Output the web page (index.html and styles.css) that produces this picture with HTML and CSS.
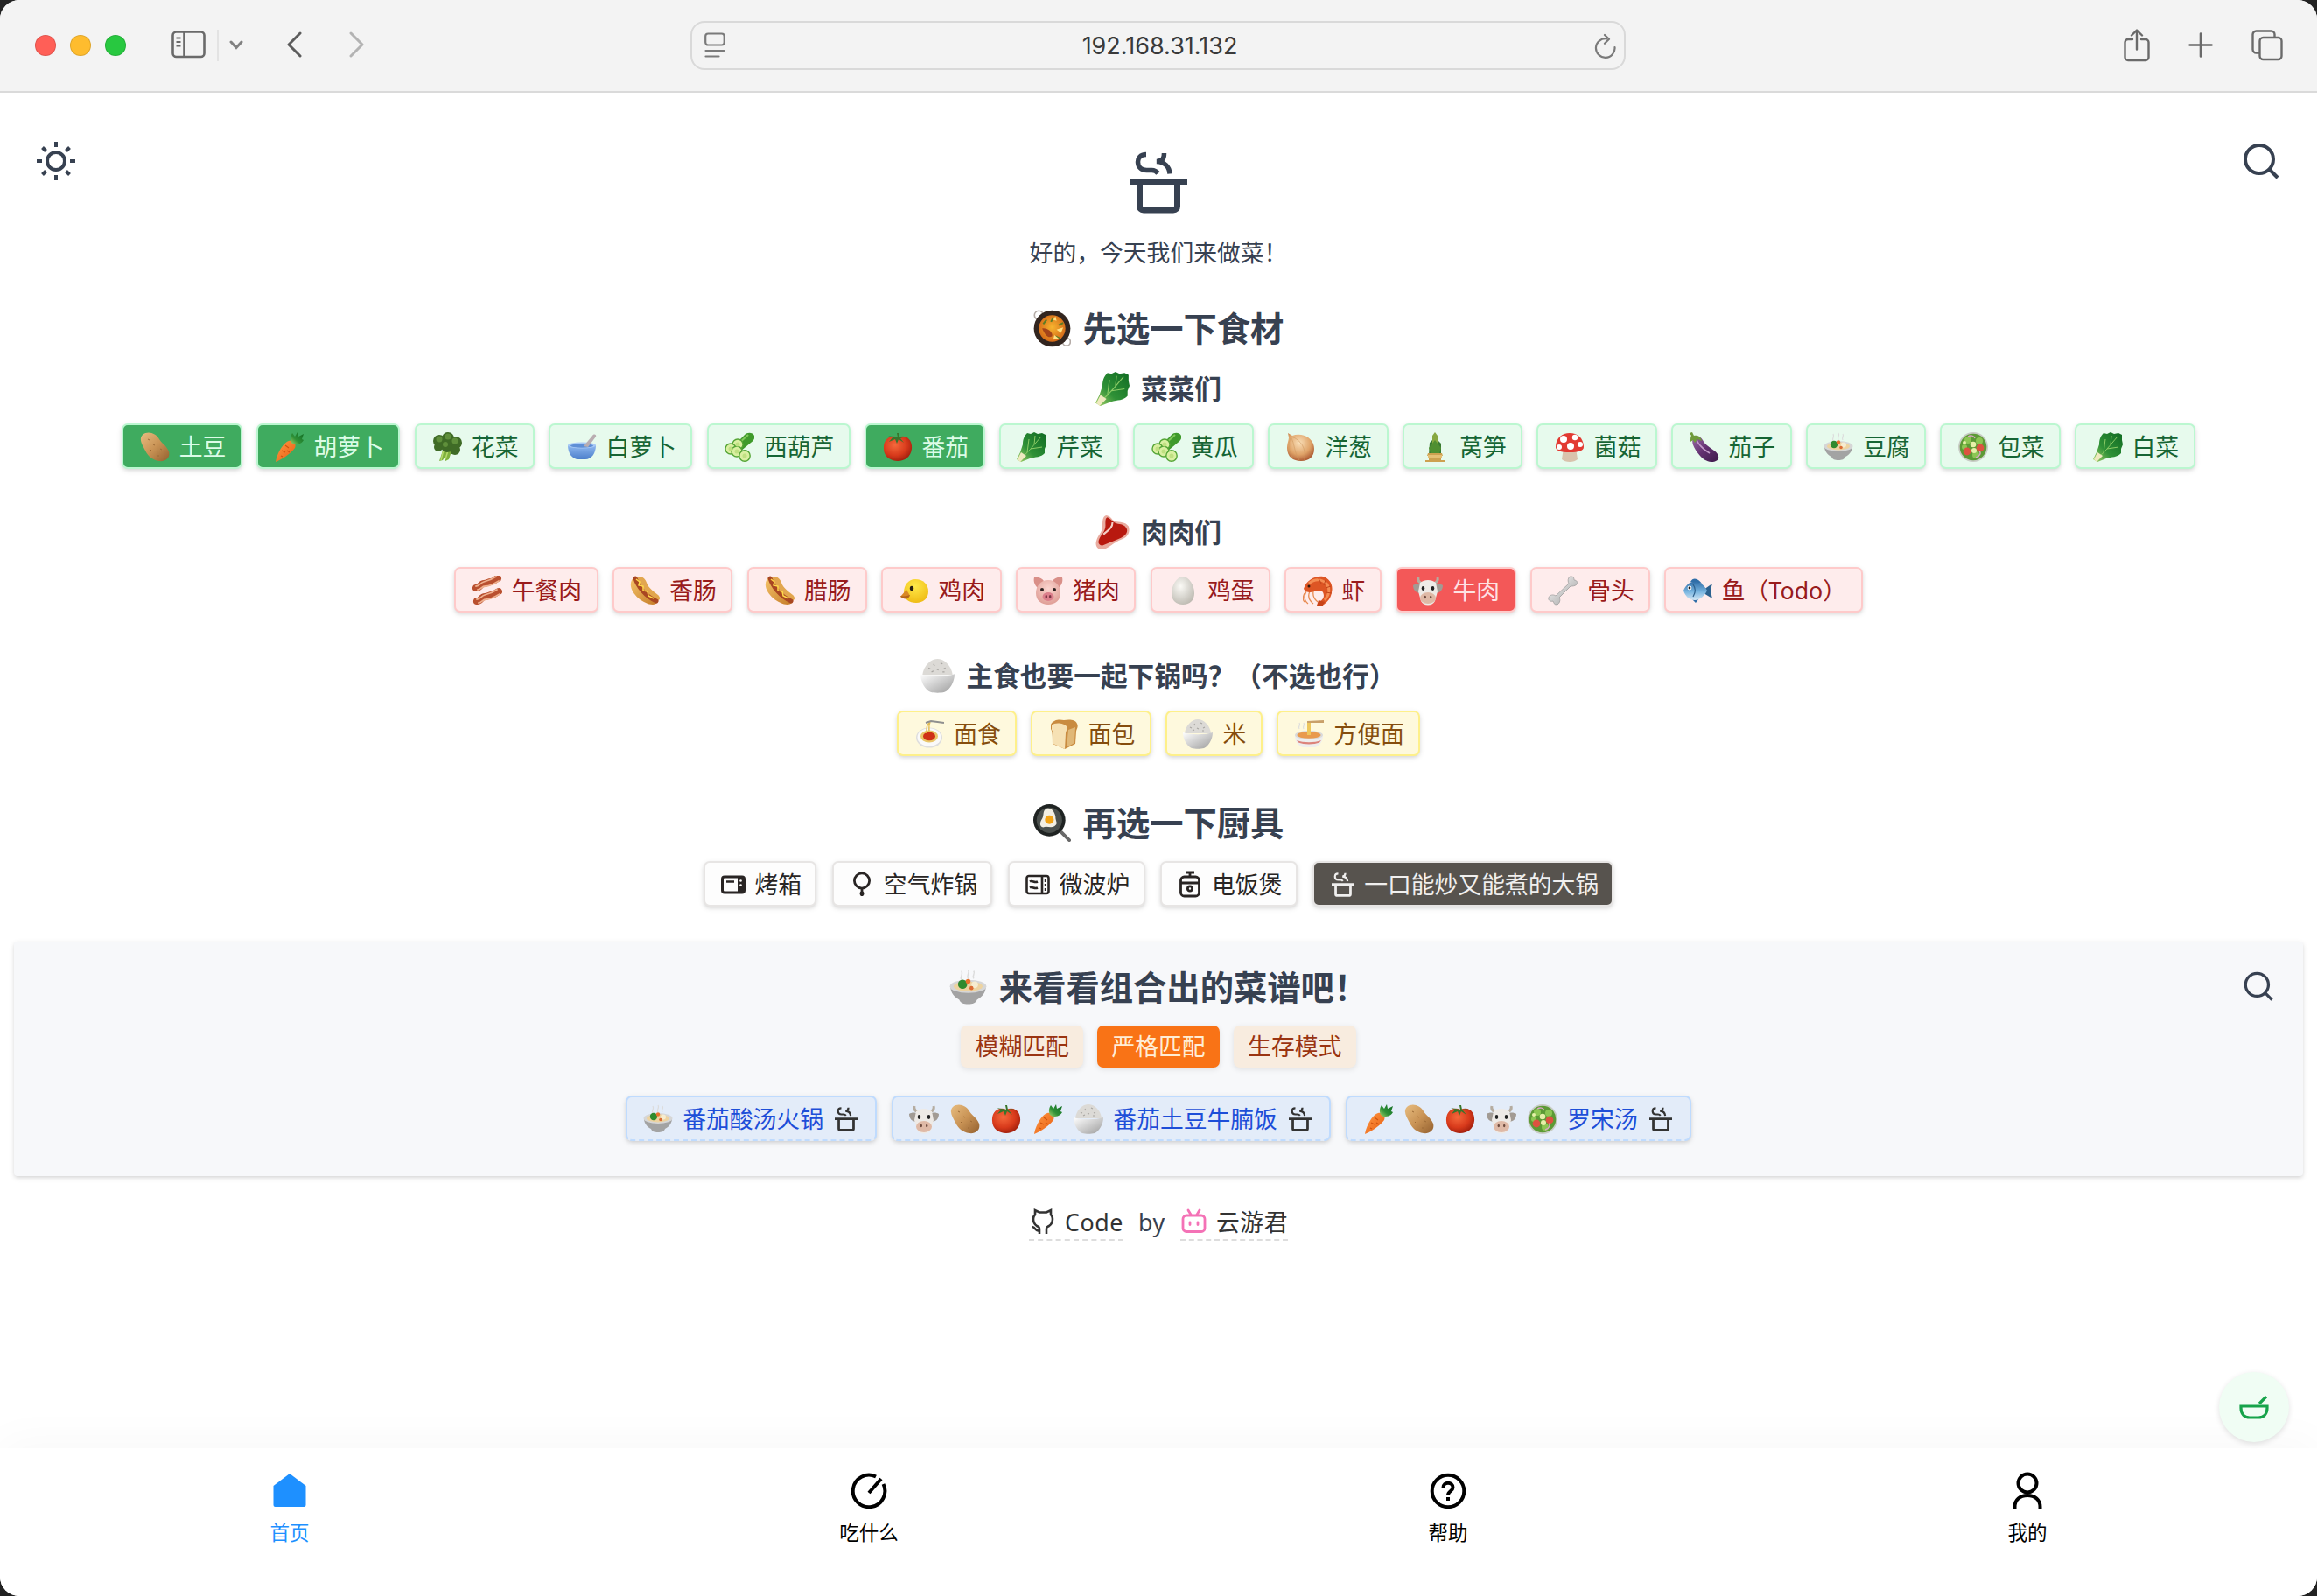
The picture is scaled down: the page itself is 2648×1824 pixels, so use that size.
FILE: index.html
```html
<!DOCTYPE html>
<html lang="zh-CN">
<head>
<meta charset="utf-8">
<title>好的，今天我们来做菜！</title>
<link rel="stylesheet" href="styles.css">
</head>
<body>
<svg class="sprite" aria-hidden="true">
  <defs>
    <linearGradient id="g-brown" x1="0" y1="0" x2="1" y2="1"><stop offset="0" stop-color="#e8bd80"/><stop offset=".5" stop-color="#c99355"/><stop offset="1" stop-color="#93602f"/></linearGradient>
    <linearGradient id="g-orange" x1="0" y1="0" x2="1" y2="1"><stop offset="0" stop-color="#ff9a45"/><stop offset="1" stop-color="#e85c10"/></linearGradient>
    <radialGradient id="g-tomato" cx=".4" cy=".35" r=".7"><stop offset="0" stop-color="#f5693c"/><stop offset=".6" stop-color="#d83a1b"/><stop offset="1" stop-color="#9c1d0c"/></radialGradient>
    <linearGradient id="g-leaf" x1="0" y1="1" x2="1" y2="0"><stop offset="0" stop-color="#a9d46b"/><stop offset=".4" stop-color="#2f9137"/><stop offset="1" stop-color="#0f6a22"/></linearGradient>
    <linearGradient id="g-blue" x1="0" y1="0" x2="0" y2="1"><stop offset="0" stop-color="#8fb8f0"/><stop offset="1" stop-color="#4c7fcb"/></linearGradient>
    <linearGradient id="g-bowl" x1="0" y1="0" x2="1" y2="1"><stop offset="0" stop-color="#ffffff"/><stop offset="1" stop-color="#9c9c9c"/></linearGradient>
    <radialGradient id="g-onion" cx=".45" cy=".35" r=".7"><stop offset="0" stop-color="#f9dfb8"/><stop offset=".6" stop-color="#dfa368"/><stop offset="1" stop-color="#a5502b"/></radialGradient>
    <linearGradient id="g-plum" x1="0" y1="0" x2="1" y2="1"><stop offset="0" stop-color="#9a6aa5"/><stop offset=".5" stop-color="#623070"/><stop offset="1" stop-color="#3d1a4a"/></linearGradient>
    <radialGradient id="g-yellow" cx=".45" cy=".3" r=".75"><stop offset="0" stop-color="#ffe94a"/><stop offset="1" stop-color="#eeb911"/></radialGradient>
    <radialGradient id="g-pig" cx=".5" cy=".35" r=".7"><stop offset="0" stop-color="#fbd5cf"/><stop offset="1" stop-color="#dd9a92"/></radialGradient>
    <radialGradient id="g-egg" cx=".4" cy=".35" r=".75"><stop offset="0" stop-color="#fbfaf6"/><stop offset="1" stop-color="#b9b6ad"/></radialGradient>
    <linearGradient id="g-bun" x1="0" y1="0" x2="1" y2="1"><stop offset="0" stop-color="#f5c46a"/><stop offset="1" stop-color="#c47a26"/></linearGradient>
    <linearGradient id="g-fish" x1="0" y1="0" x2="0" y2="1"><stop offset="0" stop-color="#2f6ea8"/><stop offset=".55" stop-color="#79b5e0"/><stop offset="1" stop-color="#d5e8f5"/></linearGradient>
    <radialGradient id="g-curry" cx=".5" cy=".45" r=".55"><stop offset="0" stop-color="#f7b52f"/><stop offset="1" stop-color="#d56a18"/></radialGradient>
  </defs>

  <symbol id="potato" viewBox="0 0 34 34"><path d="M3 3C9-2 18 1 22 8c3 5 8 7 11 14 2 7-4 12-11 11C14 32 9 27 6 21 3 15-2 8 3 3z" fill="url(#g-brown)"/><path d="M9 8l2 1M15 14l2 1M12 20l1 1M23 19l2 1M20 27l2 0" stroke="#9c6a36" stroke-width="1"/></symbol>
  <symbol id="carrot" viewBox="0 0 34 34"><path d="M17 10c5-1 9 3 7 8C19 25 9 31 2 34 3 26 10 12 17 10z" fill="url(#g-orange)"/><path d="M13 15l4 3M9 21l4 2M18 23l-3-2M8 27l2 1" stroke="#cf520d" stroke-width="1.1"/><path d="M20 12c-2-4-1-8 1-11l3 4 3-5 1 5 6-3-2 6 2 1c-3 5-7 5-11 5z" fill="url(#g-leaf)"/></symbol>
  <symbol id="broccoli" viewBox="0 0 34 34"><path d="M13 18l-5 15 4-1 2-3 1 4 4-2 4-12 5-3-6-4z" fill="#7fb23c"/><path d="M13 20l-3 12M18 21l-3 10" stroke="#b5d96c" stroke-width="1.5"/><g fill="#3f6b26"><circle cx="8" cy="10" r="7"/><circle cx="18" cy="7" r="7"/><circle cx="27" cy="12" r="7"/><circle cx="7" cy="17" r="5"/><circle cx="17" cy="16" r="7"/><circle cx="26" cy="20" r="6"/></g><g fill="#5f8f3b"><circle cx="8" cy="8" r="3.5"/><circle cx="18" cy="5" r="3.5"/><circle cx="26" cy="10" r="3.5"/><circle cx="15" cy="14" r="3"/></g></symbol>
  <symbol id="bowl-spoon" viewBox="0 0 34 34"><path d="M1 15h32c0 9-5 16-12 16h-8C6 31 1 24 1 15z" fill="url(#g-blue)"/><ellipse cx="17" cy="15" rx="16" ry="3.4" fill="#a9caf5"/><ellipse cx="17" cy="15.5" rx="13" ry="2.2" fill="#5f8fd6"/><path d="M19 16L29 4c2-3 5-1 4 1l-9 12z" fill="#b9adb1"/></symbol>
  <symbol id="cucumber" viewBox="0 0 34 34"><path d="M12 14L23 3c3-3 9-3 11 1 1 3-1 6-4 8L18 22z" fill="#3f9a2b"/><path d="M16 13L27 3" stroke="#80c95a" stroke-width="2"/><g fill="#d9efa1" stroke="#55a536" stroke-width="1.4"><circle cx="15" cy="14" r="6"/><circle cx="7" cy="19" r="6"/><circle cx="14" cy="22" r="6"/><circle cx="23" cy="27" r="6.2"/></g><g fill="#bfe081"><circle cx="15" cy="14" r="2.500"/><circle cx="7" cy="19" r="2.500"/><circle cx="14" cy="22" r="2.500"/><circle cx="23" cy="27" r="2.500"/></g></symbol>
  <symbol id="tomato" viewBox="0 0 34 34"><path d="M17 6C27 2 34 9 33 19c-1 9-8 14-16 14S1 28 1 19C0 9 8 2 17 6z" fill="url(#g-tomato)"/><path d="M17 6l-1-5 2 0 1 5 7-1-6 2 4 5-6-4-2 5-2-5-7 3 4-5-5-2z" fill="#38752b"/></symbol>
  <symbol id="leafy" viewBox="0 0 34 34"><path d="M12 1l4 1 4-2 4 2 5-1 4 2v6l1 5-2 5v5c-4 5-11 4-17 6L5 34l-5-3 4-8 3-9c0-5 1-9 5-13z" fill="url(#g-leaf)"/><path d="M3 31C12 25 20 14 28 5M12 23L14 8M16 19l13-2M20 14l1-10" stroke="#8ccb66" stroke-width="1" fill="none"/><path d="M1 31l4-8 6 4-7 7z" fill="#efe9bf"/></symbol>
  <symbol id="onion" viewBox="0 0 34 34"><path d="M2 1l5 3C19 0 32 7 32 19c0 9-6 14-15 14S1 28 1 18C1 13 3 9 3 6z" fill="url(#g-onion)"/><path d="M5 5c5 8 4 19 10 27M6 5c11 4 17 13 15 27M6 5C1 13 3 22 7 29" fill="none" stroke="#d09a62" stroke-width=".6"/></symbol>
  <symbol id="bamboo" viewBox="0 0 34 34"><path d="M17 0l3 4v21h-6V4z" fill="#87a840"/><path d="M11 12l3-3v17h-4zM20 9l4 4v13h-4z" fill="#3b7b34"/><path d="M10 18l7-9 7 9-2 6H12z" fill="#4f8f31"/><path d="M9 24h16l1 3H8zM10 29h14v3H10zM6 32h22v2H6z" fill="#cda14f"/><path d="M9 26h16v4H9z" fill="#e5c074"/></symbol>
  <symbol id="mushroom" viewBox="0 0 34 34"><path d="M10 18h14l2 13c-4 4-14 4-18 0z" fill="#d9c3ac"/><path d="M1 17C1 7 8 1 17 1s16 6 16 16c0 4-6 6-16 6S1 21 1 17z" fill="#e23a32"/><g fill="#fff"><circle cx="10" cy="8" r="4"/><circle cx="23" cy="6" r="3.2"/><circle cx="18" cy="16" r="4"/><circle cx="29" cy="14" r="3"/><circle cx="5" cy="17" r="3"/></g></symbol>
  <symbol id="eggplant" viewBox="0 0 34 34"><path d="M4 7c3-4 8-3 11 2 3 6 8 8 13 12 6 4 7 10 2 12-6 3-14-1-18-6C7 21 1 13 4 7z" fill="url(#g-plum)"/><path d="M8 9c3 6 8 11 15 15" stroke="#c39bca" stroke-width="1.6" fill="none"/><path d="M0 1l3-1 2 4c5-1 8 2 9 6l-5-2-3 4-2-3-3 2c0-3 0-6 1-7z" fill="#6f9b3a"/></symbol>
  <symbol id="stew" viewBox="0 0 34 34"><path d="M11 10c-2-3 2-4 0-8M17 9c-2-3 2-5 0-8M22 9c-2-3 2-4 0-7" stroke="#dcdcdc" stroke-width="1.200" fill="none"/><path d="M1 16h32c0 6-4 10-8 12-1 3-4 4-8 4s-7-1-8-4C5 26 1 22 1 16z" fill="#a3a3a3"/><ellipse cx="17" cy="16" rx="16.500" ry="6" fill="#d6d6d6"/><ellipse cx="17" cy="16" rx="13" ry="4.400" fill="#edd3a0"/><circle cx="12" cy="14" r="4.200" fill="#2f8a2e"/><circle cx="17" cy="11.500" r="2.200" fill="#e8722c"/><circle cx="23" cy="14.500" r="3" fill="#f6ecd0"/><circle cx="20" cy="17.500" r="1.800" fill="#dd6b33"/></symbol>
  <symbol id="salad" viewBox="0 0 34 34"><circle cx="17" cy="17" r="17" fill="#c8ccc5"/><circle cx="17" cy="17" r="15.300" fill="#5c9a35"/><g fill="#8cc653"><circle cx="11" cy="9" r="4"/><circle cx="24" cy="10" r="4"/><circle cx="20" cy="26" r="4"/><circle cx="7" cy="17" r="3"/></g><g fill="#dc5340"><circle cx="25" cy="18" r="4.400"/><circle cx="10" cy="22" r="4.400"/></g><g fill="#e6f0a8"><circle cx="17" cy="14" r="3.300"/><circle cx="18" cy="21" r="3"/><circle cx="7" cy="12" r="2"/></g><path d="M20 29c5-1 6-6 4-7M11 5c3-2 7-1 8 2" stroke="#d9a6c4" stroke-width="1.400" fill="none"/></symbol>
  <symbol id="bacon" viewBox="0 0 34 34"><g fill="none" stroke-linecap="round" stroke-linejoin="round"><path d="M4 14c4 1 5-5 9-5s5-2 8-2 5-3 8-4" stroke="#b9502f" stroke-width="8"/><path d="M4 12c4 0 5-4 9-5s8-2 14-6M6 16c4 0 4-4 9-4s10-3 15-6" stroke="#efb08e" stroke-width="1.800"/><path d="M5 29c4 1 5-5 9-5s5-2 8-2 5-3 8-4" stroke="#b9502f" stroke-width="8"/><path d="M5 27c4 0 5-4 9-5s8-2 14-6M7 31c4 0 4-4 9-4s10-3 15-6" stroke="#efb08e" stroke-width="1.800"/></g></symbol>
  <symbol id="hotdog" viewBox="0 0 34 34"><path d="M2 5c4-6 9-3 12 2 4 7 9 10 15 15 6 5 3 11-3 11C14 33-4 17 2 5z" fill="url(#g-bun)"/><path d="M8 3c5-4 9 0 11 5 2 6 8 10 13 14 5 5 0 8-4 6C17 23 9 13 8 3z" fill="#e2a64e"/><path d="M6 3C9 12 17 23 30 29" fill="none" stroke="#a94722" stroke-width="5" stroke-linecap="round"/><path d="M7 4l4 3-1 4 5 1 0 5 5 1 1 5 6 3" fill="none" stroke="#ffd84a" stroke-width="1.500"/></symbol>
  <symbol id="chick" viewBox="0 0 34 34"><path d="M18 4c9 0 15 6 15 14s-6 13-14 13S5 27 5 19 10 4 18 4z" fill="url(#g-yellow)"/><path d="M8 16l-7 8c3 3 8 2 11-1z" fill="#d98825"/><path d="M1 23c4 1 8 0 11-1l-2 4c-4 1-7 0-9-3z" fill="#b5641a"/><ellipse cx="14" cy="14.500" rx="2.200" ry="2.800" fill="#2b2113"/></symbol>
  <symbol id="pig" viewBox="0 0 34 34"><path d="M1 2c5-1 9 1 11 4l-7 8C1 10 0 6 1 2zM33 2c-5-1-9 1-11 4l7 8c4-4 5-8 4-12z" fill="#d98f88"/><path d="M17 5c9 0 14 7 14 15s-6 13-14 13S3 28 3 20 8 5 17 5z" fill="url(#g-pig)"/><ellipse cx="17" cy="24" rx="6.500" ry="5" fill="#dc7f8c"/><ellipse cx="14.800" cy="24" rx="1.300" ry="2" fill="#7d3645"/><ellipse cx="19.200" cy="24" rx="1.300" ry="2" fill="#7d3645"/><circle cx="10" cy="16" r="2" fill="#2b2020"/><circle cx="24" cy="16" r="2" fill="#2b2020"/></symbol>
  <symbol id="egg" viewBox="0 0 34 34"><path d="M17 1c7 0 13 10 13 19 0 8-5 13-13 13S4 28 4 20C4 11 10 1 17 1z" fill="url(#g-egg)"/></symbol>
  <symbol id="shrimp" viewBox="0 0 34 34"><path d="M4 18C1 24 2 29 6 32M8 18c-3 6-1 10 4 14M12 18c-1 6 1 9 5 12M2 20c-2 4-2 8 0 10" fill="none" stroke="#e78a50" stroke-width="1.300"/><path d="M1 15C4 5 14 0 23 1c8 2 12 10 10 18-1 7-5 11-9 14l-5-3c5-3 6-7 4-11-2-3-6-2-10-1-5 2-10 1-12-3z" fill="#dd5524"/><path d="M7 9C14 3 22 4 27 9c4 5 4 12-2 19" fill="none" stroke="#f48c52" stroke-width="3"/><path d="M18 3l3 6M26 5l-2 6M32 12l-6 2M33 20l-7-1" stroke="#c2451a" stroke-width="1"/><path d="M18 28l7 2-2 4-7 0z" fill="#c94317"/><circle cx="7" cy="12" r="1.500" fill="#33180e"/></symbol>
  <symbol id="cow" viewBox="0 0 34 34"><path d="M6 2c-1 4 1 6 5 7M28 2c1 4-1 6-5 7" stroke="#b5aca0" stroke-width="3" fill="none"/><path d="M0 11c3-2 7-2 10 0l-1 9c-6 0-9-4-9-9zM34 11c-3-2-7-2-10 0l1 9c6 0 9-4 9-9z" fill="#a29b94"/><path d="M8 8c5-4 13-4 18 0l2 10-3 11c-3 6-13 6-16 0L6 18z" fill="#eeeae6"/><ellipse cx="17" cy="25.500" rx="9" ry="6.500" fill="#dfb9a6"/><ellipse cx="13.800" cy="24.500" rx="1.200" ry="1.800" fill="#6d4a3e"/><ellipse cx="20.200" cy="24.500" rx="1.200" ry="1.800" fill="#6d4a3e"/><ellipse cx="11.500" cy="14.500" rx="1.800" ry="2.400" fill="#222"/><ellipse cx="22.500" cy="14.500" rx="1.800" ry="2.400" fill="#222"/></symbol>
  <symbol id="bone" viewBox="0 0 34 34"><path d="M24 9c-2-4 0-9 3-8 3 0 3 3 3 4 3 0 5 3 3 5s-5 2-7 2L13 25c2 3 0 8-3 8s-3-2-4-4c-3 1-6-1-5-4s5-4 8-2z" fill="url(#g-bowl)" stroke="#9e9e9e" stroke-width=".8"/></symbol>
  <symbol id="fish" viewBox="0 0 34 34"><path d="M24 16l10-7c-2 6-2 10 0 17l-10-6z" fill="#2c628f"/><path d="M9 7c3-6 9-4 13 2zM10 26l5 5 4-5z" fill="#2f6ea8"/><path d="M1 17C5 8 11 6 16 7c6 1 10 6 12 10-3 6-8 11-14 11C7 28 3 23 1 17z" fill="url(#g-fish)"/><circle cx="8" cy="14" r="2.400" fill="#fff"/><circle cx="8" cy="14" r="1.400" fill="#111"/><path d="M12 10c3 4 3 9 0 14" stroke="#2b5e8a" stroke-width="1.200" fill="none"/></symbol>
  <symbol id="pasta" viewBox="0 0 34 34"><ellipse cx="17" cy="21" rx="15" ry="11.500" fill="#dedede"/><ellipse cx="17" cy="20.500" rx="13.500" ry="10.300" fill="#fafafa"/><ellipse cx="17" cy="19.500" rx="10" ry="7" fill="#e9c66a"/><ellipse cx="17" cy="19.500" rx="7" ry="4.800" fill="#cf3016"/><path d="M14 16c0-6 0-9 3-12M17 15c0-5-1-8 1-12" stroke="#e3bd54" stroke-width="1.500" fill="none"/><path d="M13 4l6-2 15 2" stroke="#8f8f8f" stroke-width="2" fill="none"/></symbol>
  <symbol id="bread" viewBox="0 0 34 34"><path d="M2 6C5 0 12 0 17 1c6-1 13-1 15 4 2 4-1 6-1 9l-1 14-12 6-14-6C4 20 4 14 2 11z" fill="#c98b40"/><path d="M3 7c3-4 14-3 17 1 2 3-1 5-1 8l-1 18-13-6C5 20 5 14 3 12z" fill="#f6e1b4"/><path d="M22 12l8-3-1 18-9 5z" fill="#e0b878"/></symbol>
  <symbol id="rice" viewBox="0 0 34 34"><path d="M2 16C3 7 10 0 17 0s14 7 15 16z" fill="#dcdad6"/><path d="M8 9l2 1M13 5l1 2M20 4l2 1M25 9l-2 1M16 10l2 1M11 13l2-1M22 13l2 0" stroke="#a8a6a2" stroke-width="1.100"/><path d="M0 15c9 3 25 3 34 0 0 8-5 16-10 18-4 1-10 1-14 0C5 31 0 23 0 15z" fill="url(#g-bowl)"/></symbol>
  <symbol id="ramen" viewBox="0 0 34 34"><path d="M6 11C4 8 8 7 6 4M11 11c-2-3 2-4 0-7" stroke="#ddd" stroke-width="1.200" fill="none"/><path d="M1 18h32c0 8-4 12-9 14H10C5 30 1 26 1 18z" fill="#eee"/><path d="M3 24c8 3 20 3 28 0l-2 2.500c-6 2.500-18 2.500-24 0z" fill="#d4564a" opacity=".7"/><ellipse cx="17" cy="18" rx="16" ry="5" fill="#dadada"/><ellipse cx="17" cy="18" rx="13.500" ry="3.800" fill="#e99a4d"/><path d="M15 18V4h4v14" fill="#eec75c"/><path d="M15 2l19-1v3H15z" fill="#c9a06a"/></symbol>
  <symbol id="paella" viewBox="0 0 34 34"><circle cx="5" cy="5" r="4" fill="none" stroke="#b5aca7" stroke-width="1.300"/><circle cx="30" cy="29" r="3.500" fill="none" stroke="#b5aca7" stroke-width="1.300"/><circle cx="17" cy="17" r="16.500" fill="#32251f"/><circle cx="17" cy="17" r="12" fill="url(#g-curry)"/><path d="M12 9l-3 4M16 11l2-4M23 14l4-2M20 24l4 2" stroke="#5d7c25" stroke-width="1.600"/><path d="M18 9l2-3 1 4zM21 18l6-2-2 5zM19 23l4 3-5 1z" fill="#ffe184"/><path d="M8 17c4-1 10 3 9 7-3 2-6 0-9-7z" fill="#a3441a"/></symbol>
  <symbol id="steak" viewBox="0 0 34 34"><path d="M11 0c5 1 5 5 9 6s10 0 13 5c2 6-1 11-7 13S14 32 8 34c-5 1-9-3-7-9s6-8 6-14 0-10 4-11z" fill="#e9aca0"/><path d="M12 2c4 2 5 5 9 6s8 1 10 5-2 8-7 10-11 5-17 7c-4 0-5-3-3-7s6-7 6-13 0-7 2-8z" fill="#b8190f"/><path d="M17 7c0 6-5 8-9 12" stroke="#f3cfc6" stroke-width="1.800" fill="none"/></symbol>
  <symbol id="pan" viewBox="0 0 34 34"><path d="M24 24l8.500 8.500" stroke="#696969" stroke-width="3" stroke-linecap="round"/><circle cx="14.500" cy="14.500" r="14.500" fill="#1f2322"/><circle cx="14.500" cy="14.500" r="11.500" fill="#4b504d"/><path d="M12 4c5-1 7 3 8 7 0 5 3 6-1 9-4 2-7-1-10 1-4-1-3-5-1-8s0-7 4-9z" fill="#f3efe3"/><circle cx="14.500" cy="14" r="4" fill="#f2a315"/></symbol>

  <symbol id="pot" viewBox="0 0 66 71"><path d="M19 3.500C12 3.500 9.500 8 9.500 12c0 5 3.500 9.500 10 9.500h6c3 0 5 1 7 3.500M39.500 2c0 6-1.500 9-8.500 9.500 9 .500 14.500 6 15 14" fill="none" stroke="currentColor" stroke-width="5.500"/><path d="M0 34.500h66M11.500 34.500v28c0 2.500 1.500 4.500 4.500 4.500h34c3 0 4.500-2 4.500-4.500v-28" fill="none" stroke="currentColor" stroke-width="7"/></symbol>
  <symbol id="search" viewBox="0 0 44 44"><g fill="none" stroke="currentColor" stroke-width="4"><circle cx="20" cy="20" r="16"/><path d="M31 31l10 10"/></g></symbol>
</svg>

<div class="window">
  <header class="toolbar">
    <div class="lights"><i class="red"></i><i class="amber"></i><i class="green"></i></div>
    <svg class="tb sidebar" width="40" height="32" viewBox="0 0 40 32"><g fill="none" stroke="#6a6a6a" stroke-width="2.600"><rect x="1.500" y="1.500" width="36" height="28.500" rx="4"/><path d="M14.500 2v28"/><path d="M5.500 8.500h5M5.500 13h5M5.500 17.500h5" stroke-width="2"/></g></svg>
    <span class="tb-divider"></span>
    <svg class="tb chevron" width="16" height="12" viewBox="0 0 16 12"><path d="M2 2l6 6.500L14 2" fill="none" stroke="#808080" stroke-width="3" stroke-linecap="round"/></svg>
    <svg class="tb back" width="18" height="32" viewBox="0 0 18 32"><path d="M16 3L3 16l13 13" fill="none" stroke="#5c5c5c" stroke-width="3" stroke-linecap="round" stroke-linejoin="round"/></svg>
    <svg class="tb forward" width="18" height="32" viewBox="0 0 18 32"><path d="M2 3l13 13L2 29" fill="none" stroke="#b3b3b3" stroke-width="3" stroke-linecap="round" stroke-linejoin="round"/></svg>
    <div class="address">
      <svg width="24" height="30" viewBox="0 0 24 30"><g fill="none" stroke="#7a7a7a" stroke-width="2.200" stroke-linecap="round"><rect x="1.200" y="1.500" width="21.500" height="13" rx="3"/><path d="M1.500 21h21M1.500 27.500h15"/></g></svg>
      <span>192.168.31.132</span>
      <svg width="26" height="30" viewBox="0 0 26 30"><g fill="none" stroke="#7a7a7a" stroke-width="2.200" stroke-linecap="round" stroke-linejoin="round"><path d="M23.500 17A10.800 10.800 0 1 1 14 7.300M12 3l5 4.800-5 5"/></g></svg>
    </div>
    <div class="tb-actions">
      <svg width="30" height="38" viewBox="0 0 30 38"><g fill="none" stroke="#6a6a6a" stroke-width="2.400" stroke-linecap="round" stroke-linejoin="round"><path d="M10 12H5a3.500 3.500 0 0 0-3.500 3.500v17A3.500 3.500 0 0 0 5 36h20a3.500 3.500 0 0 0 3.500-3.500v-17A3.500 3.500 0 0 0 25 12h-5"/><path d="M15 23.500V2M9 7.500l6-6 6 6"/></g></svg>
      <svg width="28" height="38" viewBox="0 0 28 38"><path d="M14 5.500v26M1.500 18.500h25" stroke="#6a6a6a" stroke-width="2.600" stroke-linecap="round"/></svg>
      <svg width="36" height="38" viewBox="0 0 36 38"><g fill="none" stroke="#6a6a6a" stroke-width="2.400"><rect x="9.500" y="10" width="25" height="25" rx="4"/><path d="M9 27.500H5.500A4 4 0 0 1 1.500 23.500V6.500a4 4 0 0 1 4-4h17a4 4 0 0 1 4 4v3"/></g></svg>
    </div>
  </header>

  <main>
    <div class="hero">
      <svg class="sun" width="44" height="44" viewBox="0 0 44 44"><g fill="none" stroke="currentColor" stroke-width="4"><circle cx="22" cy="22" r="10"/><path d="M22 0v6M22 38v6M0 22h6M38 22h6M6.500 6.500l4 4M33.500 33.500l4 4M6.500 37.500l4-4M33.500 10.500l4-4"/></g></svg>
      <svg class="logo" width="66" height="71"><use href="#pot"/></svg>
      <svg class="hero-search" width="44" height="44"><use href="#search"/></svg>
    </div>
    <p class="tagline">好的，今天我们来做菜！</p>

    <h1 class="title"><svg class="emoji"><use href="#paella"/></svg><span>先选一下食材</span></h1>

    <section class="group">
      <h2><svg class="emoji"><use href="#leafy"/></svg><span>菜菜们</span></h2>
      <div class="chips veg">
        <button class="chip on"><svg class="emoji"><use href="#potato"/></svg>土豆</button>
        <button class="chip on"><svg class="emoji"><use href="#carrot"/></svg>胡萝卜</button>
        <button class="chip"><svg class="emoji"><use href="#broccoli"/></svg>花菜</button>
        <button class="chip"><svg class="emoji"><use href="#bowl-spoon"/></svg>白萝卜</button>
        <button class="chip"><svg class="emoji"><use href="#cucumber"/></svg>西葫芦</button>
        <button class="chip on"><svg class="emoji"><use href="#tomato"/></svg>番茄</button>
        <button class="chip"><svg class="emoji"><use href="#leafy"/></svg>芹菜</button>
        <button class="chip"><svg class="emoji"><use href="#cucumber"/></svg>黄瓜</button>
        <button class="chip"><svg class="emoji"><use href="#onion"/></svg>洋葱</button>
        <button class="chip"><svg class="emoji"><use href="#bamboo"/></svg>莴笋</button>
        <button class="chip"><svg class="emoji"><use href="#mushroom"/></svg>菌菇</button>
        <button class="chip"><svg class="emoji"><use href="#eggplant"/></svg>茄子</button>
        <button class="chip"><svg class="emoji"><use href="#stew"/></svg>豆腐</button>
        <button class="chip"><svg class="emoji"><use href="#salad"/></svg>包菜</button>
        <button class="chip"><svg class="emoji"><use href="#leafy"/></svg>白菜</button>
      </div>
    </section>

    <section class="group">
      <h2><svg class="emoji"><use href="#steak"/></svg><span>肉肉们</span></h2>
      <div class="chips meat">
        <button class="chip"><svg class="emoji"><use href="#bacon"/></svg>午餐肉</button>
        <button class="chip"><svg class="emoji"><use href="#hotdog"/></svg>香肠</button>
        <button class="chip"><svg class="emoji"><use href="#hotdog"/></svg>腊肠</button>
        <button class="chip"><svg class="emoji"><use href="#chick"/></svg>鸡肉</button>
        <button class="chip"><svg class="emoji"><use href="#pig"/></svg>猪肉</button>
        <button class="chip"><svg class="emoji"><use href="#egg"/></svg>鸡蛋</button>
        <button class="chip"><svg class="emoji"><use href="#shrimp"/></svg>虾</button>
        <button class="chip on"><svg class="emoji"><use href="#cow"/></svg>牛肉</button>
        <button class="chip"><svg class="emoji"><use href="#bone"/></svg>骨头</button>
        <button class="chip"><svg class="emoji"><use href="#fish"/></svg>鱼（Todo）</button>
      </div>
    </section>

    <section class="group">
      <h2><svg class="emoji"><use href="#rice"/></svg><span>主食也要一起下锅吗？（不选也行）</span></h2>
      <div class="chips staple">
        <button class="chip"><svg class="emoji"><use href="#pasta"/></svg>面食</button>
        <button class="chip"><svg class="emoji"><use href="#bread"/></svg>面包</button>
        <button class="chip"><svg class="emoji"><use href="#rice"/></svg>米</button>
        <button class="chip"><svg class="emoji"><use href="#ramen"/></svg>方便面</button>
      </div>
    </section>

    <h1 class="title"><svg class="emoji"><use href="#pan"/></svg><span>再选一下厨具</span></h1>
    <div class="chips tool">
      <button class="chip"><svg class="icon" viewBox="0 0 28 28"><rect x="1.500" y="5" width="25" height="18" rx="2.500" fill="none" stroke="currentColor" stroke-width="3"/><path d="M19 4h7v20h-7z" fill="currentColor"/><path d="M6 10.500h9" stroke="currentColor" stroke-width="2.500"/><circle cx="22.500" cy="9.500" r="1.300" fill="#fff"/><circle cx="22.500" cy="14.500" r="1.300" fill="#fff"/></svg>烤箱</button>
      <button class="chip"><svg class="icon" viewBox="0 0 28 28"><g fill="none" stroke="currentColor" stroke-width="2.800"><circle cx="14" cy="9.500" r="8.600"/><path d="M14 18v9"/></g><circle cx="14" cy="24" r="2.500" fill="currentColor"/></svg>空气炸锅</button>
      <button class="chip"><svg class="icon" viewBox="0 0 28 28"><g fill="none" stroke="currentColor" stroke-width="2.600"><rect x="1.500" y="4" width="25" height="20" rx="2.500"/><path d="M19 4v20M5 10.500c3-2 5 2 9 0M5 17.500c3-2 5 2 9 0"/><path d="M22.800 8v3M22.800 13v3M22.800 18v3" stroke-width="2"/></g></svg>微波炉</button>
      <button class="chip"><svg class="icon" viewBox="0 0 28 28"><g fill="none" stroke="currentColor" stroke-width="2.800"><path d="M9 0h10M14 0v5M3.500 12h21"/><rect x="3.500" y="5" width="21" height="22" rx="4"/><circle cx="14" cy="18.500" r="2.600"/></g></svg>电饭煲</button>
      <button class="chip on"><svg class="icon" viewBox="0 0 28 28"><use href="#pot" width="26" height="28" x="1"/></svg>一口能炒又能煮的大锅</button>
    </div>

    <section class="panel">
      <h1 class="title"><svg class="emoji"><use href="#stew"/></svg><span>来看看组合出的菜谱吧！</span></h1>
      <svg class="panel-search" width="36" height="36"><use href="#search"/></svg>
      <div class="tabs">
        <button>模糊匹配</button><button class="on">严格匹配</button><button>生存模式</button>
      </div>
      <div class="chips recipe">
        <a class="chip"><svg class="emoji"><use href="#stew"/></svg>番茄酸汤火锅<svg class="icon"><use href="#pot"/></svg></a>
        <a class="chip"><svg class="emoji"><use href="#cow"/></svg><svg class="emoji"><use href="#potato"/></svg><svg class="emoji"><use href="#tomato"/></svg><svg class="emoji"><use href="#carrot"/></svg><svg class="emoji"><use href="#rice"/></svg>番茄土豆牛腩饭<svg class="icon"><use href="#pot"/></svg></a>
        <a class="chip"><svg class="emoji"><use href="#carrot"/></svg><svg class="emoji"><use href="#potato"/></svg><svg class="emoji"><use href="#tomato"/></svg><svg class="emoji"><use href="#cow"/></svg><svg class="emoji"><use href="#salad"/></svg>罗宋汤<svg class="icon"><use href="#pot"/></svg></a>
      </div>
    </section>

    <footer class="credit">
      <a><svg width="32" height="32" viewBox="0 0 32 32"><path d="M12 30v-6c0-2-1-2-3-3-3-2-4-4-4-8 0-2 1-4 2-5V3l5 2.500h8L25 3v5c1 1 2 3 2 5 0 4-1 6-4 8-2 1-3 1-3 3v6M12 26.500c-5 1-4-4-8-4.500" fill="none" stroke="#333" stroke-width="2.600"/></svg><span>Code</span></a>
      <span class="by">by</span>
      <a><svg width="32" height="32" viewBox="0 0 32 32"><g fill="none" stroke="#f472b6" stroke-width="2.800" stroke-linecap="round"><rect x="3" y="9" width="25" height="18.500" rx="4"/><path d="M9 3l3 5M22 3l-3 5M11 17v2.500M20 17v2.500"/></g></svg><span>云游君</span></a>
    </footer>
  </main>

  <button class="fab"><svg width="36" height="36" viewBox="0 0 36 36"><path d="M3 17h30v2c0 7-4 11-10 11H13C7 30 3 26 3 19zM24 14l8-8" fill="none" stroke="#16a34a" stroke-width="3.200"/></svg></button>

  <nav class="tabbar">
    <a class="on"><svg width="44" height="44" viewBox="0 0 44 44"><path d="M22 2l18.500 14v22a2 2 0 0 1-2 2h-33a2 2 0 0 1-2-2V16z" fill="currentColor"/></svg>首页</a>
    <a><svg width="44" height="44" viewBox="0 0 44 44"><g fill="none" stroke="currentColor" stroke-width="4"><path d="M30 5.500A18.300 18.300 0 1 0 38.500 14M22 24L36 8"/></g></svg>吃什么</a>
    <a><svg width="44" height="44" viewBox="0 0 44 44"><g fill="none" stroke="currentColor" stroke-width="4"><circle cx="22" cy="22" r="18.300"/><path d="M16.500 18c0-7 11-7 11 0 0 4-5.500 4-5.500 8.500M22 29v4"/></g></svg>帮助</a>
    <a><svg width="44" height="44" viewBox="0 0 44 44"><g fill="none" stroke="currentColor" stroke-width="4"><circle cx="22" cy="13" r="10.500"/><path d="M7.500 43v-3c0-8 6-13 14.500-13s14.500 5 14.500 13v3"/></g></svg>我的</a>
  </nav>
</div>
</body>
</html>
```
FILE: styles.css
```css
* { box-sizing: border-box; }
body {
  margin: 0;
  background: #222;
  font-family: "Noto Sans", "Noto Sans CJK SC", sans-serif;
  font-size: 26.8px;
  color: #374151;
  text-spacing-trim: space-all;
}
button { font: inherit; color: inherit; border: 0; padding: 0; background: none; }
svg { display: block; flex: none; }
.sprite { position: absolute; width: 0; height: 0; }
.window {
  position: relative;
  display: flex;
  flex-direction: column;
  width: 2648px;
  height: 1824px;
  background: #fff;
  border-radius: 22px;
  overflow: hidden;
}

/* browser toolbar */
.toolbar {
  display: flex;
  align-items: center;
  height: 106px;
  padding: 0 39px 1px 40px;
  background: #f3f3f3;
  border-bottom: 2px solid #dadada;
}
.lights { display: flex; gap: 16px; }
.lights i { width: 24px; height: 24px; border-radius: 50%; border: 1px solid rgba(0,0,0,.12); }
.red { background: #ff5f57; }
.amber { background: #febc2e; }
.green { background: #28c840; }
.sidebar { margin: 0 0 2px 52px; }
.tb-divider { width: 2px; height: 36px; margin-left: 12px; background: #e3e3e3; }
.chevron { margin-left: 12px; }
.back { margin: 0 0 2px 49px; }
.forward { margin: 0 0 2px 54px; }
.address {
  display: flex;
  align-items: center;
  justify-content: space-between;
  width: 1069px;
  height: 56px;
  margin-left: 372px;
  padding: 0 8px 0 14px;
  border: 2px solid #d9d9d9;
  border-radius: 16px;
  font: 27px Inter, sans-serif;
  color: #3a3a3a;
}
.address span { padding-top: 2px; }
.tb-actions { display: flex; gap: 44px; margin-left: auto; }

/* page head */
main { flex: 1; display: flex; flex-direction: column; }
.hero { display: flex; justify-content: space-between; padding: 56px 42px 0; }
.logo { margin-top: 11px; }
.tagline { margin: 25px 0 0; height: 40px; line-height: 40px; text-align: center; }
.title, h2 { display: flex; justify-content: center; align-items: center; margin: 0; font-weight: 700; }
.title { height: 48px; margin-top: 42px; font-size: 38.300px; gap: 14px; }
.title .emoji { width: 43px; height: 43px; }
.title span, h2 span { padding-bottom: 3px; }
h2 { height: 40px; font-size: 30.700px; gap: 13px; }
h2 .emoji { width: 39px; height: 39px; }
.group { margin-bottom: 52px; }
.title + .group { margin-top: 25px; }

/* chips */
.chips { display: flex; justify-content: center; gap: 16.200px; }
h2 + .chips { margin-top: 20px; }
.chip {
  display: flex;
  align-items: center;
  height: 52px;
  padding: 1px 16.500px 0 18.400px;
  border: 2px solid;
  border-radius: 7px;
  line-height: 40px;
  white-space: nowrap;
  box-shadow: 0 2px 6px rgba(0,0,0,.1), 0 2px 4px -1px rgba(0,0,0,.1);
}
.chip .emoji { width: 34px; height: 34px; margin-right: 11px; }
.chip .icon { width: 28px; height: 28px; margin-right: 10.500px; overflow: visible; }
.veg .chip { background: #e7faed; border-color: #bbf7d0; color: #166534; }
.veg .on { background: #3fab5f; color: #dcfce7; }
.meat .chip { background: #feecec; border-color: #fecaca; color: #991b1b; }
.meat .on { background: #f35858; color: #fee2e2; }
.staple .chip { background: #fef9dd; border-color: #fef08a; color: #854d0e; }
.group + .title { margin-top: 0; }
.tool { margin-top: 20px; gap: 17.600px; }
.tool .chip { background: #fdfdfd; border-color: #e7e5e4; color: #292524; padding-right: 15.300px; }
.tool .on { background: #57534e; color: #f0efee; }

/* recipe panel */
.panel {
  position: relative;
  height: 268px;
  margin: 40px 16px 0;
  padding-top: 28px;
  background: #f7f8fa;
  border-radius: 4px;
  box-shadow: 0 2px 6px rgba(0,0,0,.1), 0 2px 4px -1px rgba(0,0,0,.1);
}
.panel .title { margin: 0; }
.panel-search { position: absolute; top: 33px; right: 33px; color: #374151; }
.tabs { display: flex; justify-content: center; gap: 15.500px; margin-top: 20px; }
.tabs button {
  height: 48px;
  padding: 0 16.500px;
  line-height: 48px;
  border-radius: 7px;
  background: #f8ecdf;
  color: #9a3412;
  box-shadow: 0 2px 6px rgba(0,0,0,.1);
}
.tabs .on { background: #f97316; color: #ffedd5; }
.recipe { margin-top: 32px; gap: 16.500px; }
.recipe .chip { background: #e3ecf9; border-color: #bfdbfe; border-bottom-style: dashed; color: #1d4ed8; padding-right: 20.500px; }
.recipe .emoji + .emoji { margin-left: 2px; }
.recipe .icon { width: 26px; height: 28px; margin: 0 0 0 13px; color: #333; }

/* credit line */
.credit { display: flex; justify-content: center; gap: 17px; margin-top: 32px; height: 42px; line-height: 40px; }
.credit a { display: flex; align-items: center; gap: 9px; color: #333; border-bottom: 2px dashed #ddd; }
.credit span { letter-spacing: .6px; padding-top: 1px; }

/* floating basket */
.fab {
  position: absolute;
  left: 2536px;
  top: 1568px;
  z-index: 2;
  display: grid;
  place-items: center;
  width: 80px;
  height: 80px;
  border-radius: 50%;
  background: #f0fdf4;
  box-shadow: 0 2px 6px rgba(0,0,0,.12);
}

/* bottom navigation */
.tabbar { display: flex; height: 169px; background: #fff; box-shadow: 0 -6px 50px rgba(0,0,0,.03); }
.tabbar a {
  flex: 1;
  display: flex;
  flex-direction: column;
  align-items: center;
  padding-top: 27px;
  font-size: 22.500px;
  line-height: 32px;
  color: #000;
}
.tabbar svg { margin-bottom: 10px; }
.tabbar .on { color: #1e90ff; }
```
